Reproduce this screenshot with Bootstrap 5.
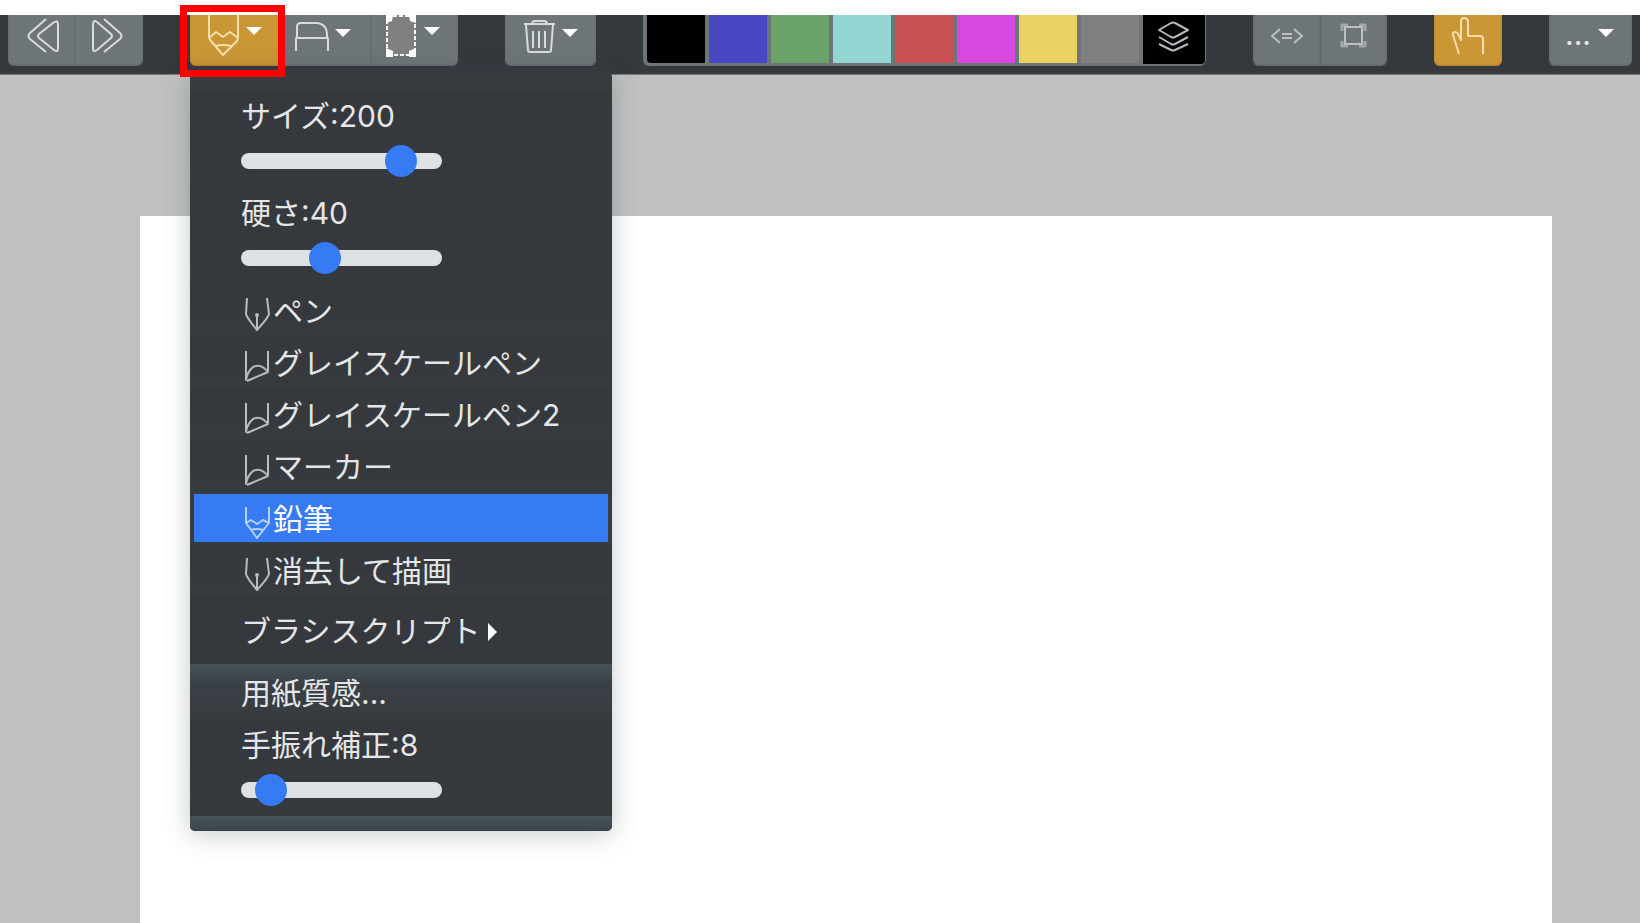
<!DOCTYPE html>
<html lang="ja">
<head>
<meta charset="utf-8">
<meta name="viewport" content="width=device-width, initial-scale=1">
<title>ペイント</title>
<link href="https://cdn.jsdelivr.net/npm/bootstrap@5.3.0/dist/css/bootstrap.min.css" rel="stylesheet">
<style>
body { font-family: Inter, "Noto Sans CJK JP", sans-serif; background: #fff; padding-top: 15px; }
svg { display: block; fill: none; stroke-width: 2; stroke-linejoin: round; }
.toolbar { background: #35383d; height: 60px; gap: 47px; border-bottom: 1px solid #777b7d; }
.tool-group { height: 51px; }
.tool-btn { --bs-btn-bg: #6e7579; --bs-btn-hover-bg: #7a8286; --bs-btn-border-width: 0; --bs-btn-border-radius: 6px;
  --bs-btn-padding-x: 0; --bs-btn-padding-y: 0; flex: none; height: 51px; border-top-left-radius: 0 !important; border-top-right-radius: 0 !important;
  color: #fff; stroke: #d8dadc; box-shadow: inset 0 -1px 2px #5d6468; }
.tool-group > .tool-btn:last-of-type { border-bottom-right-radius: 6px !important; }
.tool-btn.split { border-left: 1px solid #62696d; }
.tool-btn.dim { stroke: #bcc0c2; }
.tool-btn.active { background: #cb9636; stroke: #f6dfa9; box-shadow: inset 0 -1px 2px #b07f2a; }
.caret { fill: #fff; stroke: none; }
.palette { background: #6c7578; gap: 4px; padding: 0 1px 4px 4px; border-radius: 0 0 6px 6px; }
.swatch { width: 58px; height: 48px; border: 0; padding: 0; }
.swatch:first-child { border-bottom-left-radius: 4px; }
.layers { width: 62px; height: 49px; background: #000; stroke: #b4b8bd; border-radius: 0 0 4px 0; }
.more-text { font-size: 30px; line-height: 38px; color: #e6e7e8; }
.callout-frame { position: absolute; left: -10px; top: -10px; width: 105px; height: 72px; border: 7px solid #f00; z-index: 1010; pointer-events: none; }
.brush-menu { --bs-dropdown-font-size: 30px; top: 100%; left: 0; margin-top: 6px; width: 422px; padding: 18px 0 0; border: 0; border-radius: 5px;
  background: #363c40; color: #e4e6e7; box-shadow: 0 3px 26px rgba(60, 75, 80, .3); }
.menu-row { height: 52px; padding: 2px 51px 0; background: linear-gradient(#35383d, #363b3f); color: #e4e6e7; stroke: #b9bdbf; border: 0; line-height: 50px; }
.menu-row svg { width: 32px; height: 52px; margin-top: -2px; }
.menu-row:hover, .menu-row:focus { color: #fff; }
.menu-row.active { height: 48px; margin: 2px 4px; width: calc(100% - 8px); padding: 0 47px; background: #367bf3; color: #fff; stroke: #b5d3ff; }
.script-row { height: 68px; background: #35383d; }
.texture-row { height: 55px; padding-top: 3px; background: linear-gradient(#46535a, #3a4146 35%, #363b3f); border-radius: 0; }
.slider-row { height: 97px; padding: 5px 51px 0; background: linear-gradient(#35383d, #363a3e); }
.slider-row label { display: block; height: 50px; line-height: 42px; }
.form-range { display: block; width: 201px; height: 32px; }
.form-range::-webkit-slider-runnable-track { height: 16px; background: #dfe2e5; border-radius: 8px; }
.form-range::-webkit-slider-thumb { width: 32px; height: 32px; margin-top: -8px; background: #367bf3; }
.form-range::-moz-range-track { height: 16px; background: #dfe2e5; border-radius: 8px; }
.form-range::-moz-range-thumb { width: 32px; height: 32px; background: #367bf3; }
.menu-foot { height: 15px; background: linear-gradient(#46535a, #3c4449); border-radius: 0 0 5px 5px; }
.workspace { background: #c0c0c0; padding: 141px 88px 0 140px; }
.sheet { background: #fff; }
</style>
</head>
<body class="d-flex flex-column min-vh-100">
<header class="toolbar d-flex align-items-start px-2" role="toolbar" aria-label="ツールバー">
  <div class="btn-group tool-group">
    <button type="button" class="btn tool-btn" aria-label="元に戻す"><svg width="67" height="51"><path d="M50 10V33Q50 38 46 35L31 23Q29 21 31 19L45 8Q50 4 50 10M38 4L22 18Q19 21 22 24L38 37"/></svg></button>
    <button type="button" class="btn tool-btn ms-0" aria-label="やり直す"><svg width="68" height="51"><path d="M18 10V33Q18 38 22 35L36 23Q38 21 36 19L22 7Q18 4 18 10M29 4L45 18Q48 21 45 24L29 37"/></svg></button>
  </div>

  <div class="btn-group tool-group dropdown">
    <button type="button" class="btn tool-btn active" aria-label="ブラシ" aria-expanded="true"><svg width="88" height="51"><path d="M19 0V22Q19 24 21 26L33 40L47 26Q48 24 48 22V0M19 23L26 17L33 22L40 17L48 23M25 31Q33 29 41 31"/><path class="caret" d="M56 12H72L64 20Z"/></svg></button>
    <button type="button" class="btn tool-btn ms-0" aria-label="消しゴム"><svg width="93" height="51"><path d="M18 36V23H50V36M19 23V12Q19 8 23 8H39Q50 9 49 23"/><path class="caret" d="M57 14H73L65 22Z"/></svg></button>
    <button type="button" class="btn tool-btn ms-0" aria-label="選択範囲"><svg width="87" height="51"><path fill="#808080" stroke="none" d="M15 1H45V41H15Z"/><path stroke="#fff" stroke-dasharray="4 2" d="M16 1H44V40H16Z"/><path fill="#fff" stroke="none" d="M15 0H22L21 6L15 8ZM38 0H45V8L39 6ZM15 33L22 36V42H15ZM45 33V42H38L38 36Z"/><path class="caret" d="M53 12H69L61 20Z"/></svg></button>
    <span class="callout-frame"></span>

    <div class="dropdown-menu brush-menu show">
      <div class="slider-row"><label for="size">サイズ:200</label><input type="range" class="form-range" id="size" value="85"></div>
      <div class="slider-row"><label for="hardness">硬さ:40</label><input type="range" class="form-range" id="hardness" value="40"></div>
      <button type="button" class="dropdown-item menu-row d-flex"><svg><path d="M6 14L5 30Q6 34 16 46Q27 34 28 30L26 14M16 32V45"/><circle cx="16" cy="31" r="1"/></svg>ペン</button>
      <button type="button" class="dropdown-item menu-row d-flex"><svg><path d="M5 15V44Q6 36 12 31Q20 27 27 36L6 45M27 15V35"/></svg>グレイスケールペン</button>
      <button type="button" class="dropdown-item menu-row d-flex"><svg><path d="M5 15V44Q6 36 12 31Q20 27 27 36L6 45M27 15V35"/></svg>グレイスケールペン2</button>
      <button type="button" class="dropdown-item menu-row d-flex"><svg><path d="M5 15V44Q6 36 12 31Q20 27 27 36L6 45M27 15V35"/></svg>マーカー</button>
      <button type="button" class="dropdown-item menu-row d-flex active"><svg><path d="M5 15V31L16 46L28 31V15M5 31L10 28L16 32L22 28L28 31M10 38Q16 36 22 38"/></svg>鉛筆</button>
      <button type="button" class="dropdown-item menu-row d-flex"><svg><path d="M6 14L5 30Q6 34 16 46Q27 34 28 30L26 14M16 32V45"/><circle cx="16" cy="31" r="1"/></svg>消去して描画</button>
      <button type="button" class="dropdown-item menu-row script-row d-flex align-items-center gap-1">ブラシスクリプト<svg viewBox="0 0 32 52"><path class="caret" d="M4 19L13 28L4 37Z"/></svg></button>
      <button type="button" class="dropdown-item menu-row texture-row">用紙質感...</button>
      <div class="slider-row"><label for="stabilizer">手振れ補正:8</label><input type="range" class="form-range" id="stabilizer" value="8"></div>
      <div class="menu-foot"></div>
    </div>
  </div>

  <div class="btn-group tool-group">
    <button type="button" class="btn tool-btn" aria-label="消去"><svg width="91" height="51"><path d="M19 9H50M27 9Q27 6 30 6H39Q42 6 42 9M21 10L23 35Q23 37 25 37H44Q46 37 46 35L48 10M28 16V33M34 16V33M40 16V33"/><path class="caret" d="M57 14H73L65 22Z"/></svg></button>
  </div>

  <div class="palette tool-group d-flex">
    <button type="button" class="swatch" style="background:#000000" aria-label="黒"></button>
    <button type="button" class="swatch" style="background:#4848c3" aria-label="青"></button>
    <button type="button" class="swatch" style="background:#6aa26a" aria-label="緑"></button>
    <button type="button" class="swatch" style="background:#94d6d2" aria-label="水色"></button>
    <button type="button" class="swatch" style="background:#c95151" aria-label="赤"></button>
    <button type="button" class="swatch" style="background:#d848e0" aria-label="紫"></button>
    <button type="button" class="swatch" style="background:#ebd162" aria-label="黄"></button>
    <button type="button" class="swatch" style="background:#808080" aria-label="灰"></button>
    <button type="button" class="swatch layers" aria-label="レイヤー"><svg width="62" height="49"><path d="M16 15L28 8Q30 7 32 8L45 15L32 22Q30 23 28 22ZM16 22L28 29Q30 30 32 29L45 22M16 29L28 35Q30 36 32 35L45 29"/></svg></button>
  </div>

  <div class="btn-group tool-group">
    <button type="button" class="btn tool-btn dim" aria-label="左右反転"><svg width="67" height="51"><path d="M27 14L19 21L27 28M41 14L49 21L41 28M29 19H39M29 23H39"/></svg></button>
    <button type="button" class="btn tool-btn dim split ms-0" aria-label="全体表示"><svg width="66" height="51"><path stroke="#a2a7aa" stroke-width="3" d="M21 16V10H27M38 10H44V16M21 26V31H27M38 31H44V26"/><path d="M24 12H41V29H24Z"/></svg></button>
  </div>

  <div class="btn-group tool-group">
    <button type="button" class="btn tool-btn active" aria-label="タッチ操作"><svg width="68" height="51"><path d="M25 39L19 20Q18 17 21 17Q23 17 24 19L27 25V7Q27 3 30 3Q34 3 34 7V21H46Q49 21 49 24V39"/></svg></button>
  </div>

  <div class="btn-group tool-group">
    <button type="button" class="btn tool-btn d-flex"><span class="more-text ps-3">...</span><svg width="41" height="51"><path class="caret" d="M7 14H23L15 22Z"/></svg></button>
  </div>
</header>

<main class="workspace d-flex flex-grow-1">
  <div class="sheet flex-grow-1"></div>
</main>
<script src="https://cdn.jsdelivr.net/npm/bootstrap@5.3.0/dist/js/bootstrap.bundle.min.js"></script>
</body>
</html>
